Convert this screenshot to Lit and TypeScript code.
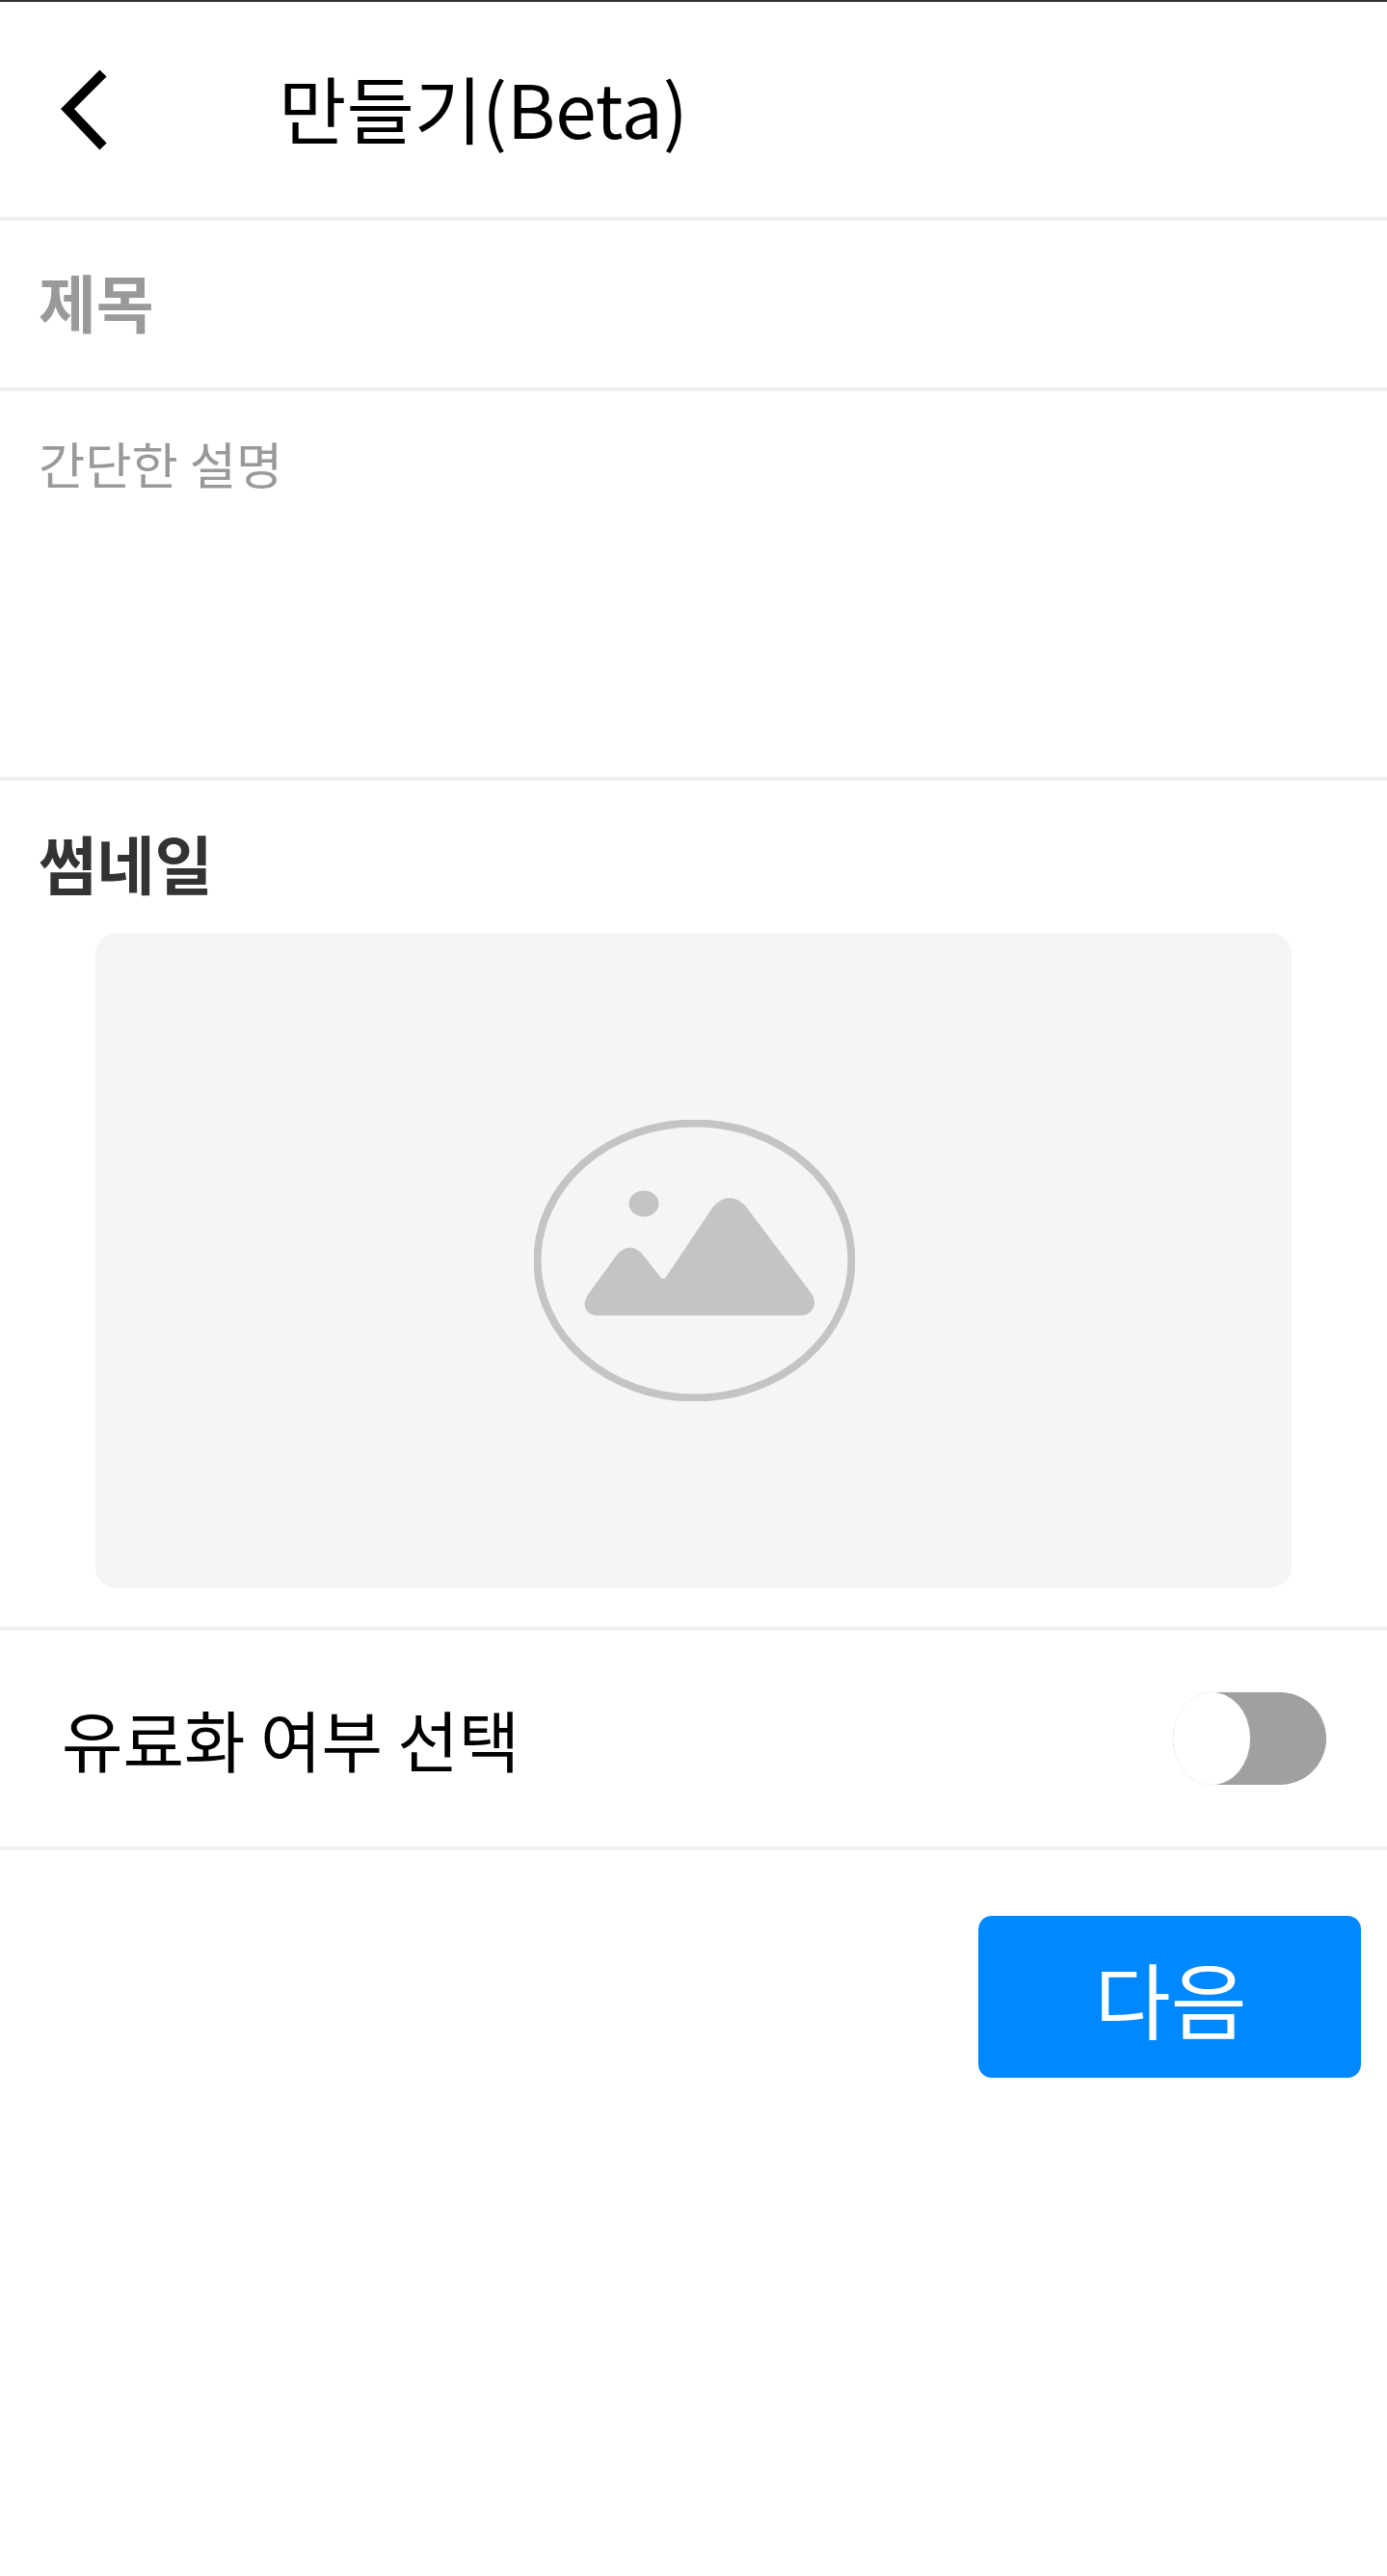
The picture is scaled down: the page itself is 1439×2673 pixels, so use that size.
import { LitElement, html, css } from "lit";
import { customElement } from "lit/decorators.js";

@customElement("app-root")
export class AppRoot extends LitElement {
  static styles = css`
    :host {
      display: block;
      width: 1439px;
      height: 2673px;
      background: #fff;
      font-family: "Noto Sans CJK KR", "Noto Sans", sans-serif;
      overflow: hidden;
    }
    .page { border-top: 2px solid #333; }
    .header {
      height: 223px;
      display: flex;
      align-items: center;
      padding-left: 58px;
      border-bottom: 4px solid #f0f0f0;
    }
    .back { width: 56px; height: 88px; display: block; flex: none; }
    .title {
      margin-left: 175px;
      font-size: 76.5px;
      line-height: 100px;
      color: #000;
      position: relative;
      top: -3px;
    }
    .field {
      height: 173px;
      display: flex;
      align-items: center;
      padding-left: 40px;
      border-bottom: 4px solid #f0f0f0;
      font-size: 65px;
      font-weight: 700;
      color: #999;
      line-height: 88px;
    }
    .field span { position: relative; top: -4px; }
    .desc {
      height: 404px;
      padding: 38px 0 0 40px;
      box-sizing: border-box;
      border-bottom: 4px solid #f0f0f0;
      font-size: 52.5px;
      line-height: 72px;
      color: #999;
    }
    .thumb-section {
      height: 882px;
      box-sizing: border-box;
      border-bottom: 4px solid #f0f0f0;
      padding-top: 41px;
    }
    .thumb-title {
      padding-left: 40px;
      font-size: 65.5px;
      line-height: 88px;
      font-weight: 700;
      color: #333;
    }
    .thumb {
      margin: 29px 0 0 99px;
      width: 1241px;
      height: 680px;
      box-sizing: border-box;
      padding-left: 2px;
      background: #f5f5f5;
      border-radius: 22px;
      display: flex;
      align-items: center;
      justify-content: center;
    }
    .placeholder { width: 333px; height: 292px; display: block; }
    .toggle-row {
      height: 228px;
      box-sizing: border-box;
      border-bottom: 4px solid #f0f0f0;
      display: flex;
      align-items: center;
      justify-content: space-between;
      padding: 0 63px 0 64px;
    }
    .toggle-label {
      font-size: 69px;
      line-height: 88px;
      color: #000;
    }
    .switch {
      width: 159px;
      height: 96px;
      background: #a0a0a0;
      border-radius: 48px;
      position: relative;
    }
    .knob {
      position: absolute;
      left: 0;
      top: 0;
      width: 80px;
      height: 96px;
      background: #fff;
      border-radius: 50%;
      box-shadow: 0 0 1px #ccc;
    }
    .actions {
      display: flex;
      justify-content: flex-end;
      padding: 68px 27px 0 0;
    }
    .next {
      width: 397px;
      height: 168px;
      border: 0;
      border-radius: 14px;
      background: #0088ff;
      color: #fff;
      font-family: inherit;
      font-size: 86px;
      padding: 0 0 0 2px;
    }
  `;

  render() {
    return html`
      <div class="page">
        <div class="header">
          <svg class="back" viewBox="0 0 56 88">
            <path d="M49 6 L12 43 L49 82" fill="none" stroke="#000" stroke-width="10"></path>
          </svg>
          <div class="title">만들기(Beta)</div>
        </div>
        <div class="field"><span>제목</span></div>
        <div class="desc">간단한 설명</div>
        <div class="thumb-section">
          <div class="thumb-title">썸네일</div>
          <div class="thumb">
            <svg class="placeholder" viewBox="0 0 333 292">
              <ellipse cx="166.5" cy="146" rx="163" ry="142.5" fill="none" stroke="#c4c4c4" stroke-width="8"></ellipse>
              <ellipse cx="114" cy="87" rx="15.5" ry="13.5" fill="#c4c4c4"></ellipse>
              <path fill="#c4c4c4" d="M66 203 H276 Q286 203 290 195 Q293 187 287 179 L220 90 Q203 72 186 90 L137 163 Q134 167 131 163 L113 140 Q100 125 86 140 L57 180 Q50 190 54 197 Q58 203 66 203 Z"></path>
            </svg>
          </div>
        </div>
        <div class="toggle-row">
          <div class="toggle-label">유료화 여부 선택</div>
          <div class="switch"><div class="knob"></div></div>
        </div>
        <div class="actions"><button class="next">다음</button></div>
      </div>
    `;
  }
}
